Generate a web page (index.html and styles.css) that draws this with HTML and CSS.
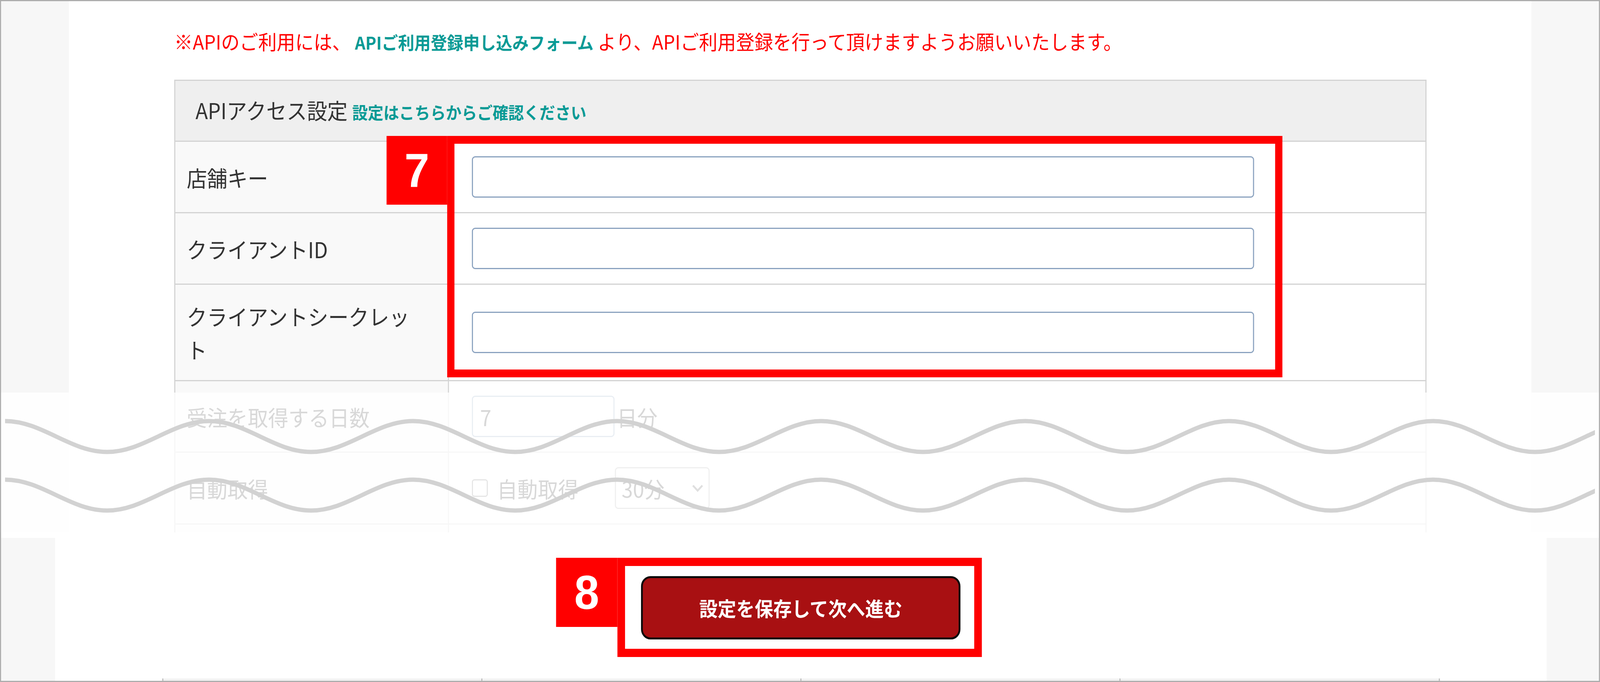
FILE: index.html
```html
<!DOCTYPE html>
<html lang="ja">
<head>
<meta charset="utf-8">
<meta name="viewport" content="width=device-width, initial-scale=1.0">
<title>APIアクセス設定</title>
<link rel="stylesheet" href="styles.css">
</head>
<body>
  <div class="stage">
  <div class="frame">
    <div class="shot shot-top">
      <div class="gutter gutter-left"></div>
      <div class="sheet">
        <p class="notice">※APIのご利用には、 <a class="link" href="#">APIご利用登録申し込みフォーム</a> より、APIご利用登録を行って頂けますようお願いいたします。</p>
        <table class="settings">
          <colgroup><col class="col-label"><col></colgroup>
          <thead>
            <tr><th colspan="2">APIアクセス設定 <a class="link" href="#">設定はこちらからご確認ください</a></th></tr>
          </thead>
          <tbody>
            <tr><td class="label">店舗キー</td><td class="value"><input class="field" type="text"></td></tr>
            <tr><td class="label">クライアントID</td><td class="value"><input class="field" type="text"></td></tr>
            <tr><td class="label">クライアントシークレット</td><td class="value"><input class="field" type="text"></td></tr>
            <tr>
              <td class="label">受注を取得する日数</td>
              <td class="value"><div class="inline"><input class="field field-short" type="text" value="7"><span class="unit">日分</span></div></td>
            </tr>
            <tr>
              <td class="label">自動取得</td>
              <td class="value">
                <div class="inline">
                  <span class="check"></span><span>自動取得</span>
                  <span class="select">30分
                    <svg width="32" height="20" viewBox="0 0 32 20"><path d="M3 3 L16 16 L29 3" fill="none" stroke="#555" stroke-width="5"/></svg>
                  </span>
                </div>
              </td>
            </tr>
            <tr><td class="label">&nbsp;</td><td class="value">&nbsp;</td></tr>
          </tbody>
        </table>
      </div>
      <div class="gutter gutter-right"></div>
    </div>

    <div class="cut-gap"></div>

    <div class="shot shot-bottom">
      <div class="gutter gutter-left"></div>
      <div class="sheet">
        <div class="callout callout-btn">
          <span class="badge">8</span>
          <button class="btn-save" type="button">設定を保存して次へ進む</button>
        </div>
        <div class="tabs-edge"><span></span><span></span><span></span><span></span></div>
      </div>
      <div class="gutter gutter-right"></div>
    </div>

    <!-- omitted part of the screen -->
    <div class="omitted">
      <svg width="4380" height="358" viewBox="0 0 4380 358">
        <path class="wave" d="M0,73 c102,0 179,79 281,79 s179,-79 281,-79 s179,79 281,79 s179,-79 281,-79 s179,79 281,79 s179,-79 281,-79 s179,79 281,79 s179,-79 281,-79 s179,79 281,79 s179,-79 281,-79 s179,79 281,79 s179,-79 281,-79 s179,79 281,79 s179,-79 281,-79 s179,79 281,79 s179,-79 281,-79 s179,79 281,79"/>
        <path class="wave" d="M0,223 c102,0 179,79 281,79 s179,-79 281,-79 s179,79 281,79 s179,-79 281,-79 s179,79 281,79 s179,-79 281,-79 s179,79 281,79 s179,-79 281,-79 s179,79 281,79 s179,-79 281,-79 s179,79 281,79 s179,-79 281,-79 s179,79 281,79 s179,-79 281,-79 s179,79 281,79 s179,-79 281,-79 s179,79 281,79"/>
      </svg>
    </div>

    <div class="callout callout-fields"><span class="badge">7</span></div>
  </div>
  </div>
  <script>
    // Fit the 4408x1746 screenshot frame into whatever window we get
    function fitFrame() {
      var frame = document.querySelector('.frame');
      var sx = window.innerWidth / 4408;
      var sy = window.innerHeight / 1746;
      frame.style.transform = 'scale(' + sx + ',' + sy + ')';
    }

    fitFrame();
    window.addEventListener('resize', fitFrame);
  </script>
</body>
</html>
```

FILE: styles.css
```css
* {
  margin: 0;
  padding: 0;
  box-sizing: border-box;
}
html, body {
  overflow: hidden;
}
body {
  font-family: "Noto Sans CJK JP", "Noto Sans", sans-serif;
  color: #333333;
  background-color: #ffffff;
}
.stage {
  width: 100vw;
  height: 100vh;
  overflow: hidden;
}

/* sizes below are screenshot pixels, the script scales the frame to the window */
.frame {
  transform-origin: 0 0;
  position: relative;
  width: 4408px;
  height: 1746px;
  border: 3px solid #adadad;
  display: flex;
  flex-direction: column;
  overflow: hidden;
  background-color: #ffffff;
}
.shot {
  display: flex;
}
.shot-top {
  height: 1360px;
  overflow: hidden;
}
.gutter {
  background-color: #f7f7f7;
}
.gutter-right {
  flex: 1;
}
.shot-top .gutter-left {
  width: 187px;
}
.shot-top .sheet {
  width: 4029px;
  background-color: #ffffff;
}
.cut-gap {
  height: 14px;
}
.shot-bottom {
  flex: 1;
}
.shot-bottom .gutter-left {
  width: 149px;
}
.shot-bottom .sheet {
  width: 4109px;
  display: flex;
  flex-direction: column;
  align-items: center;
  padding-top: 51px;
  background-color: #ffffff;
}

/* notice line */
.notice {
  padding: 67px 0 0 290px;
  font-size: 51px;
  line-height: 70px;
  color: #ff0000;
  white-space: nowrap;
}
.link {
  color: #089a95;
  font-weight: 700;
  text-decoration: none;
}
.notice .link {
  font-size: 45px;
}

/* settings table */
.settings {
  margin: 61px auto 0;
  width: 3450px;
  border-collapse: collapse;
  table-layout: fixed;
}
.settings th, .settings td {
  border: 3px solid #d3d3d3;
}
.col-label {
  width: 754px;
}
.settings th {
  background-color: #efefef;
  font-weight: 400;
  font-size: 56px;
  line-height: 80px;
  text-align: left;
  padding: 34px 56px;
}
.settings th .link {
  font-size: 43px;
}
.label {
  background-color: #f9f9f9;
  font-size: 56px;
  line-height: 85px;
  padding: 37px 80px 37px 32px;
}
.value {
  background-color: #ffffff;
  padding: 37px 63px;
}
.field {
  display: block;
  width: 2155px;
  height: 106px;
  border: 3px solid #8aa2bf;
  border-radius: 9px;
  background-color: #ffffff;
  font-family: inherit;
  font-size: 56px;
  color: #333333;
  padding: 0 20px;
  outline: none;
}
.field-short {
  width: 393px;
}
.inline {
  display: flex;
  align-items: center;
  font-size: 56px;
  line-height: 85px;
}
.unit {
  margin-left: 7px;
}
.check {
  width: 44px;
  height: 45px;
  border: 3px solid #777777;
  border-radius: 7px;
  margin-right: 26px;
}
.select {
  margin-left: 100px;
  width: 261px;
  height: 107px;
  border: 3px solid #aaaaaa;
  border-radius: 9px;
  display: flex;
  align-items: center;
  justify-content: space-between;
  padding: 0 14px 0 16px;
}

/* cut marker */
.omitted {
  position: absolute;
  left: 0;
  right: 0;
  top: 1002px;
  height: 358px;
  background-color: rgba(255, 255, 255, 0.81);
}
.omitted svg {
  display: block;
  margin-left: 11px;
}
.wave {
  fill: none;
  stroke: #d2d2d2;
  stroke-width: 11;
}

/* red callouts */
.callout {
  position: relative;
  border: 20px solid #ff0000;
}
.callout-fields {
  position: absolute;
  left: 1229px;
  top: 345px;
  width: 2301px;
  height: 618px;
}
.badge {
  position: absolute;
  display: flex;
  align-items: center;
  justify-content: center;
  background-color: #ff0000;
  color: #ffffff;
  font-family: "Liberation Sans", Arial, sans-serif;
  font-weight: 700;
  font-size: 123px;
  line-height: 1;
}
.callout-fields .badge {
  left: -187px;
  top: -20px;
  width: 167px;
  height: 176px;
}
.callout-btn {
  border-width: 21px;
  padding: 26px 38px 24px 44px;
  margin-right: 7px;
}
.callout-btn .badge {
  left: -190px;
  top: -21px;
  width: 169px;
  height: 177px;
}
.btn-save {
  display: block;
  width: 880px;
  height: 162px;
  background-color: #a81012;
  border: 5px solid #0b0b0b;
  border-radius: 26px;
  color: #ffffff;
  font-family: inherit;
  font-weight: 700;
  font-size: 51px;
}

/* top edge of the next block */
.tabs-edge {
  margin-top: auto;
  width: 3520px;
  height: 6px;
  display: flex;
}
.tabs-edge span {
  flex: 1;
  background-color: #f2f2f2;
  border-left: 3px solid #bcbcbc;
}
.tabs-edge span:last-child {
  border-right: 3px solid #bcbcbc;
}
```
